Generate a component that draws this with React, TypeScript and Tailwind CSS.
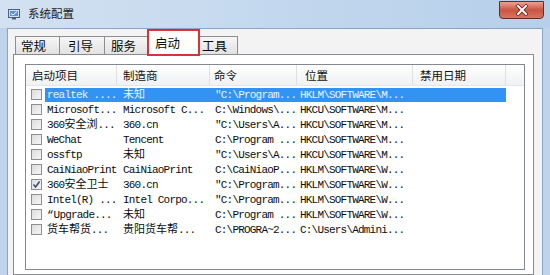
import React from "react";

const CJK = /([\u2010-\u206f\u3000-\u9fff\uff00-\uffef]+)/;

// split latin / CJK runs so the mono latin can be tightened without squeezing hanzi
const Txt = ({ s }: { s: string }) => (
  <>
    {s
      .split(CJK)
      .filter(Boolean)
      .map((p, i) =>
        CJK.test(p) ? (
          <span key={i} className="tracking-normal">
            {p}
          </span>
        ) : (
          <span key={i} className="tracking-[-0.8px]">
            {p}
          </span>
        )
      )}
  </>
);

const rows = [
  ["realtek ....", "未知", "\"C:\\Program...", "HKLM\\SOFTWARE\\M..."],
  ["Microsoft...", "Microsoft C...", "C:\\Windows\\...", "HKCU\\SOFTWARE\\M..."],
  ["360安全浏...", "360.cn", "\"C:\\Users\\A...", "HKCU\\SOFTWARE\\M..."],
  ["WeChat", "Tencent", "C:\\Program ...", "HKCU\\SOFTWARE\\M..."],
  ["ossftp", "未知", "\"C:\\Users\\A...", "HKCU\\SOFTWARE\\M..."],
  ["CaiNiaoPrint", "CaiNiaoPrint", "C:\\CaiNiaoP...", "HKLM\\SOFTWARE\\W..."],
  ["360安全卫士", "360.cn", "\"C:\\Program...", "HKLM\\SOFTWARE\\W..."],
  ["Intel(R) ...", "Intel Corpo...", "\"C:\\Program...", "HKLM\\SOFTWARE\\W..."],
  ["“Upgrade...", "未知", "C:\\Program ...", "HKLM\\SOFTWARE\\W..."],
  ["货车帮货...", "贵阳货车帮...", "C:\\PROGRA~2...", "C:\\Users\\Admini..."],
];

const tabs = [
  { label: "常规", cls: "w-[44px] pl-[5px]" },
  { label: "引导", cls: "w-[45px] pl-[8px]" },
  { label: "服务", cls: "w-[43px] pl-[6px]" },
];

const Checkbox = ({ checked }: { checked?: boolean }) => (
  <div className="w-[11px] h-[11px] border border-[#8e8f8f] bg-linear-to-br from-[#dcdcdc] to-[#f6f6f6] flex items-center justify-center">
    {checked && (
      <svg width="9" height="9" viewBox="0 0 9 9">
        <path d="M1.5 4.5 L3.6 7 L7.6 1.5" fill="none" stroke="#3c4e74" strokeWidth="1.6" />
      </svg>
    )}
  </div>
);

const App = () => {
  return (
    <div className="w-[550px] h-[275px] overflow-hidden bg-[#bfd4ec] flex flex-col font-['Noto_Sans_CJK_SC',sans-serif] text-[#111]">
      {/* title bar */}
      <div className="h-[28px] shrink-0 flex items-start bg-linear-to-r from-[#d3e1f1] via-[#c3d8ee] to-[#b6cfea]">
        <div className="flex items-center h-[28px] pl-[8px] gap-[8px]">
          <svg width="12" height="11" viewBox="0 0 12 11">
            <rect x="0.5" y="0.5" width="11" height="8" fill="#cfe0f4" stroke="#4c607c" />
            <rect x="2" y="2" width="8" height="5" fill="#5f8fd0" />
            <rect x="4" y="9" width="4" height="1.5" fill="#4c607c" />
            <path d="M3 4.5 L5 6 L9 2.5" fill="none" stroke="#ffffff" strokeWidth="1" />
          </svg>
          <span className="text-[11.5px] leading-none text-[#1b1b1b]">系统配置</span>
        </div>
        <div className="ml-auto mr-[6px] mt-[1px] w-[45px] h-[18px] rounded-b-[4px] border border-[#6b2a22] bg-linear-to-b from-[#e7a393] via-[#c95441] to-[#d77562] flex items-center justify-center">
          <svg width="14" height="12" viewBox="0 0 14 12">
            <path d="M3 2 L11 10 M11 2 L3 10" stroke="#5a1a14" strokeWidth="3.4" strokeLinecap="square" />
            <path d="M3 2 L11 10 M11 2 L3 10" stroke="#ffffff" strokeWidth="2" strokeLinecap="square" />
          </svg>
        </div>
      </div>

      {/* client area */}
      <div className="flex-1 mx-[7px] bg-[#f3f3f3] border-l border-t border-r border-[#8aa4c4] flex flex-col">
        {/* tabs */}
        <div className="h-[25px] shrink-0 flex items-end pl-[7px] text-[12.5px] text-[#0a0a0a]">
          {tabs.map((t) => (
            <div
              key={t.label}
              className={`${t.cls} h-[18px] border-t border-l border-[#8c8e94] bg-linear-to-b from-[#f6f6f6] to-[#e2e2e2] leading-[18px]`}
            >
              {t.label}
            </div>
          ))}
          <div className="relative z-10 -mb-[2px] w-[53px] h-[27px] border-2 border-[#d6333b] bg-white pl-[6px] pt-[3px] leading-[18px]">
            启动
          </div>
          <div className="w-[38px] h-[18px] border-t border-r border-[#8c8e94] bg-linear-to-b from-[#f6f6f6] to-[#e2e2e2] leading-[18px] pl-[2px]">
            工具
          </div>
        </div>

        {/* tab panel */}
        <div className="flex-1 ml-[5px] mr-[8px] bg-white border border-[#898c95] pt-[9px] pl-[11px] pr-[8px]">
          <div className="h-[206px] border border-[#828790] bg-white">
            {/* header */}
            <div className="h-[21px] flex text-[11.5px] leading-[21px] text-[#111] bg-linear-to-b from-white to-[#f0f1f3] border-b border-[#e3e4e6]">
              <div className="w-[91px] pl-[6px] border-r border-[#dfe0e2]">启动项目</div>
              <div className="w-[93px] pl-[6px] border-r border-[#dfe0e2]">制造商</div>
              <div className="w-[87px] pl-[4px] border-r border-[#dfe0e2]">命令</div>
              <div className="w-[116px] pl-[8px] border-r border-[#dfe0e2]">位置</div>
              <div className="w-[93px] pl-[7px] border-r border-[#dfe0e2]">禁用日期</div>
            </div>

            {/* rows */}
            <div className="pt-[1px] font-['Liberation_Mono','Noto_Sans_CJK_SC',monospace] text-[11px]">
              {rows.map((r, i) => {
                const sel = i === 0;
                return (
                  <div key={i} className="h-[15px] flex items-center whitespace-nowrap">
                    <div className="w-[19px] h-[15px] pl-[5px] flex items-center">
                      <Checkbox checked={i === 6} />
                    </div>
                    <div
                      className={`flex h-[14px] leading-[14px] ${
                        sel ? "bg-[#3393f2] text-[#e6f4ff]" : "text-[#0d0d0d]"
                      }`}
                    >
                      <div className="w-[72px] pl-[2px] overflow-hidden">
                        <Txt s={r[0]} />
                      </div>
                      <div className="w-[93px] pl-[6px] overflow-hidden">
                        <Txt s={r[1]} />
                      </div>
                      <div className="w-[87px] pl-[5px] overflow-hidden">
                        <Txt s={r[2]} />
                      </div>
                      <div className="w-[116px] pl-[3px] overflow-hidden">
                        <Txt s={r[3]} />
                      </div>
                      <div className="w-[93px]" />
                    </div>
                  </div>
                );
              })}
            </div>
          </div>
        </div>
      </div>
    </div>
  );
};

export default App;
